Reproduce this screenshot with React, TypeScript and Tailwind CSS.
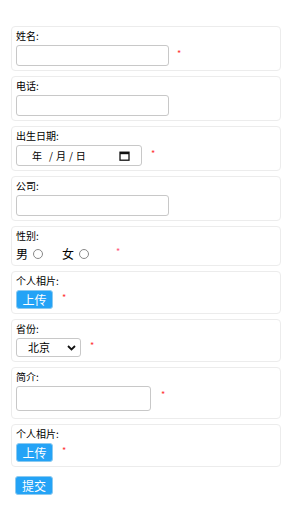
import React from "react";

const font = { fontFamily: '"Noto Sans CJK SC", "Noto Sans", sans-serif' };

function Star({ mt, ml, color = "text-[#f33]" }: { mt: string; ml: string; color?: string }) {
  return <span className={`${mt} ${ml} ${color} text-[9px] leading-[9px]`}>*</span>;
}

function Card({ label, children, pb = "pb-[4px]" }: { label: string; children: React.ReactNode; pb?: string }) {
  return (
    <div className={`border border-[#ececec] rounded-[4px] px-[4px] pt-[2px] ${pb} flex flex-col`}>
      <div className="text-[10px] leading-[13px] text-[#000]">{label}</div>
      {children}
    </div>
  );
}

function Upload() {
  return (
    <div className="mt-[3px] flex items-start">
      <div className="w-[37px] h-[19px] rounded-[3px] bg-[#24a3f6] border border-[#8ccaf0] text-white text-[12px] leading-[17px] flex items-center justify-center">
        上传
      </div>
      <Star mt="mt-[3px]" ml="ml-[9px]" />
    </div>
  );
}

export default function App() {
  return (
    <div className="w-[292px] h-[526px] bg-white pt-[26px] px-[11px]" style={font}>
      <div className="flex flex-col gap-[5px]">
        <Card label="姓名:">
          <div className="mt-[3px] flex items-start">
            <div className="w-[153px] h-[21px] border border-[#c8c8c8] rounded-[3px]" />
            <Star mt="mt-[4px]" ml="ml-[8px]" />
          </div>
        </Card>
        <Card label="电话:">
          <div className="mt-[3px] flex items-start">
            <div className="w-[153px] h-[21px] border border-[#c8c8c8] rounded-[3px]" />
          </div>
        </Card>
        <Card label="出生日期:">
          <div className="mt-[3px] flex items-start">
            <div className="w-[126px] h-[21px] border border-[#c8c8c8] rounded-[3px] flex items-center text-[10px] text-[#000] pl-[15px] pr-[11px]">
              <span>年</span>
              <span className="ml-[7px]">/</span>
              <span className="ml-[3px]">月</span>
              <span className="ml-[3px]">/</span>
              <span className="ml-[3px]">日</span>
              <svg className="ml-auto" width="11" height="10" viewBox="0 0 11 10">
                <rect x="1" y="1.2" width="9" height="8" fill="none" stroke="#111" strokeWidth="1.3" />
                <rect x="1" y="1" width="9" height="2.2" fill="#111" />
              </svg>
            </div>
            <Star mt="mt-[4px]" ml="ml-[9px]" />
          </div>
        </Card>
        <Card label="公司:">
          <div className="mt-[3px] flex items-start">
            <div className="w-[153px] h-[21px] border border-[#c8c8c8] rounded-[3px]" />
          </div>
        </Card>
        <Card label="性别:">
          <div className="mt-[4px] h-[15px] flex items-center text-[12px] leading-[15px] text-[#000]">
            <span>男</span>
            <span className="ml-[5px] w-[10px] h-[10px] rounded-full border border-[#888]" />
            <span className="ml-[19px]">女</span>
            <span className="ml-[5px] w-[10px] h-[10px] rounded-full border border-[#888]" />
            <span className="ml-[27px] mb-[5px] text-[#f57] text-[9px] leading-[9px]">*</span>
          </div>
        </Card>
        <Card label="个人相片:">
          <Upload />
        </Card>
        <Card label="省份:">
          <div className="mt-[3px] flex items-start">
            <div className="w-[65px] h-[19px] border border-[#c8c8c8] rounded-[3px] flex items-center pl-[11px] pr-[4px] text-[11px] text-[#000]">
              <span>北京</span>
              <svg className="ml-auto" width="9" height="6" viewBox="0 0 9 6">
                <path d="M1 1 L4.5 4.5 L8 1" fill="none" stroke="#111" strokeWidth="1.8" />
              </svg>
            </div>
            <Star mt="mt-[3px]" ml="ml-[9px]" />
          </div>
        </Card>
        <Card label="简介:" pb="pb-[7px]">
          <div className="mt-[3px] flex items-start">
            <div className="w-[135px] h-[25px] border border-[#c8c8c8] rounded-[3px]" />
            <Star mt="mt-[4px]" ml="ml-[10px]" />
          </div>
        </Card>
        <Card label="个人相片:">
          <Upload />
        </Card>
      </div>
      <div className="mt-[9px] ml-[4px] w-[38px] h-[19px] rounded-[3px] bg-[#24a3f6] border border-[#8ccaf0] text-white text-[12px] leading-[17px] flex items-center justify-center">
        提交
      </div>
    </div>
  );
}
